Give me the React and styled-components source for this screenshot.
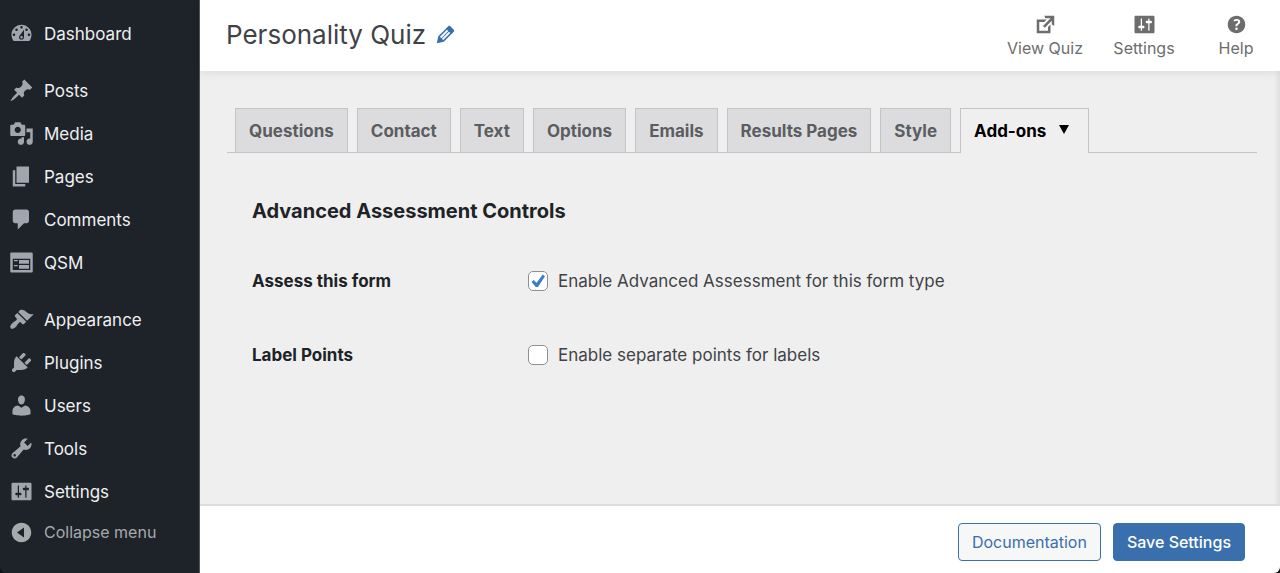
import styled, { createGlobalStyle } from 'styled-components';

const GlobalStyle = createGlobalStyle`
	* {
		box-sizing: border-box;
	}

	body {
		margin: 0;
		background-color: #111;
		font-family: Inter, 'Liberation Sans', sans-serif;
		color: #3f4347;
	}
`;

const ICONS = {
	dashboard:
		'M3.76 16h12.48c1.1-1.37 1.76-3.11 1.76-5 0-4.42-3.58-8-8-8s-8 3.58-8 8c0 1.89.66 3.63 1.76 5zM10 4c.55 0 1 .45 1 1s-.45 1-1 1-1-.45-1-1 .45-1 1-1zM6 6c.55 0 1 .45 1 1s-.45 1-1 1-1-.45-1-1 .45-1 1-1zm8 0c.55 0 1 .45 1 1s-.45 1-1 1-1-.45-1-1 .45-1 1-1zm-5.37 5.55L12 7v6c0 1.1-.9 2-2 2s-2-.9-2-2c0-.57.24-1.08.63-1.45zM4 10c.55 0 1 .45 1 1s-.45 1-1 1-1-.45-1-1 .45-1 1-1zm12 0c.55 0 1 .45 1 1s-.45 1-1 1-1-.45-1-1 .45-1 1-1zm-5 3c0-.55-.45-1-1-1s-1 .45-1 1 .45 1 1 1 1-.45 1-1z',
	posts:
		'M10.44 3.02l1.82-1.82 6.36 6.35-1.83 1.82c-1.05-.68-2.48-.57-3.41.36l-.75.75c-.92.93-1.04 2.35-.35 3.41l-1.83 1.82-2.41-2.41-2.8 2.79c-.42.42-3.38 2.71-3.8 2.29s1.86-3.39 2.28-3.81l2.79-2.79L4.1 9.36l1.83-1.82c1.05.69 2.48.57 3.4-.36l.75-.75c.93-.92 1.05-2.35.36-3.41z',
	media:
		'M13 11V4c0-.55-.45-1-1-1h-1.67L9 1H5L3.67 3H2c-.55 0-1 .45-1 1v7c0 .55.45 1 1 1h10c.55 0 1-.45 1-1zM7 4.5c1.38 0 2.5 1.12 2.5 2.5S8.38 9.5 7 9.5 4.5 8.38 4.5 7 5.62 4.5 7 4.5zM14 6h5v10.5c0 1.38-1.12 2.5-2.5 2.5S14 17.88 14 16.5s1.12-2.5 2.5-2.5c.17 0 .34.02.5.05V9h-3V6zm-4 8.05V13h2v3.5c0 1.38-1.12 2.5-2.5 2.5S7 17.88 7 16.5 8.12 14 9.5 14c.17 0 .34.02.5.05z',
	pages: 'M6 15V2h10v13H6zm-1 1h8v2H3V5h2v11z',
	comments:
		'M5 2h9c1.1 0 2 .9 2 2v7c0 1.1-.9 2-2 2h-2l-5 5v-5H5c-1.1 0-2-.9-2-2V4c0-1.1.9-2 2-2z',
	feedback:
		'M2 2h16c.55 0 1 .45 1 1v14c0 .55-.45 1-1 1H2c-.55 0-1-.45-1-1V3c0-.55.45-1 1-1zm15 14V7H3v9h14zM4 8v1h3V8H4zm4 0v3h8V8H8zm-4 4v1h3v-1H4zm4 0v3h8v-3H8z',
	appearance:
		'M14.48 11.06L7.41 3.99l1.5-1.5c.5-.56 2.3-.47 3.51.32 1.21.8 1.43 1.28 2.91 2.1 1.18.64 2.45 1.26 4.45.85zm-.71.71L6.7 4.7 4.93 6.47c-.39.39-.39 1.02 0 1.41l1.06 1.06c.39.39.39 1.03 0 1.42-.6.6-1.43 1.11-2.21 1.69-.35.26-.7.53-1.01.84C1.43 14.23.4 16.08 1.4 17.07c.99 1 2.84-.03 4.18-1.36.31-.31.58-.66.85-1.02.57-.78 1.08-1.61 1.69-2.21.39-.39 1.02-.39 1.41 0l1.06 1.06c.39.39 1.02.39 1.41 0z',
	plugins:
		'M13.11 4.36L9.87 7.6 8 5.73l3.24-3.24c.35-.34 1.05-.2 1.56.32.52.51.66 1.21.31 1.55zm-8 1.77l.91-1.12 9.01 9.01-1.19.84c-.71.71-2.63 1.16-3.82 1.16H6.14L4.9 17.26c-.59.59-1.54.59-2.12 0-.59-.58-.59-1.53 0-2.12l1.24-1.24v-3.88c0-1.13.4-3.19 1.09-3.89zm7.26 3.97l3.24-3.24c.34-.35 1.04-.21 1.55.31.52.51.66 1.21.31 1.55l-3.24 3.25z',
	users:
		'M10 9.25c-2.27 0-2.73-3.44-2.73-3.44C7 4.02 7.82 2 9.97 2c2.16 0 2.98 2.02 2.71 3.81 0 0-.41 3.44-2.68 3.44zm0 2.57L12.72 10c2.39 0 4.52 2.33 4.52 4.53v2.49s-3.65 1.13-7.24 1.13c-3.65 0-7.24-1.13-7.24-1.13v-2.49c0-2.25 1.94-4.48 4.47-4.48z',
	tools:
		'M16.68 9.77c-1.34 1.34-3.3 1.67-4.95.99l-5.41 6.52c-.99.99-2.59.99-3.58 0s-.99-2.59 0-3.57l6.52-5.42c-.68-1.65-.35-3.61.99-4.95 1.28-1.28 3.12-1.62 4.72-1.06l-2.89 2.89 2.82 2.82 2.86-2.87c.53 1.58.18 3.39-1.08 4.65zM3.81 16.21c.4.39 1.04.39 1.43 0 .4-.4.4-1.04 0-1.43-.39-.4-1.03-.4-1.43 0-.39.39-.39 1.03 0 1.43z',
	settings:
		'M18 16V4c0-.55-.45-1-1-1H3c-.55 0-1 .45-1 1v12c0 .55.45 1 1 1h14c.55 0 1-.45 1-1zM8 11h1c.55 0 1 .45 1 1s-.45 1-1 1H8v1.5c0 .28-.22.5-.5.5s-.5-.22-.5-.5V13H6c-.55 0-1-.45-1-1s.45-1 1-1h1V5.5c0-.28.22-.5.5-.5s.5.22.5.5V11zm5-2h-1c-.55 0-1-.45-1-1s.45-1 1-1h1V5.5c0-.28.22-.5.5-.5s.5.22.5.5V7h1c.55 0 1 .45 1 1s-.45 1-1 1h-1v5.5c0 .28-.22.5-.5.5s-.5-.22-.5-.5V9z',
	collapse:
		'M10 2.2c4.3 0 7.8 3.5 7.8 7.8s-3.5 7.8-7.8 7.8S2.2 14.3 2.2 10 5.7 2.2 10 2.2zM12 14V6l-5.6 4z',
	external:
		'M9 3h8v8l-2-1V6.92l-5.6 5.59-1.41-1.41L14.08 5H10zm3 12v-3l2-2v7H3V6h8L9 8H5v7h7z',
	help: 'M17 10c0-3.87-3.14-7-7-7-3.87 0-7 3.13-7 7s3.13 7 7 7c3.86 0 7-3.13 7-7zm-6.3 1.48H9.14v-.43c0-.38.08-.7.24-.98s.46-.57.88-.89c.41-.29.68-.53.81-.71.14-.18.2-.39.2-.62 0-.25-.09-.44-.28-.58-.19-.13-.45-.19-.79-.19-.58 0-1.25.19-2 .57l-.64-1.28c.87-.49 1.8-.74 2.77-.74.81 0 1.45.2 1.92.58.48.39.71.91.71 1.55 0 .43-.09.8-.29 1.11-.19.32-.57.67-1.11 1.06-.38.28-.61.49-.71.63-.1.15-.15.34-.15.57v.35zm-1.47 2.74c-.18-.17-.27-.42-.27-.73 0-.33.08-.58.26-.75s.43-.25.77-.25c.32 0 .57.09.75.26s.27.42.27.74c0 .3-.09.55-.27.72-.18.18-.43.27-.75.27-.33 0-.58-.09-.76-.26z',
	edit: 'M13.89 3.39l2.71 2.72c.46.46.42 1.24.03 1.64l-8.01 8.02-5.56 1.16 1.16-5.58s7.6-7.63 7.99-8.03c.39-.39 1.22-.39 1.68.07zm-2.73 2.79l-5.59 5.61 1.11 1.11 5.54-5.65zm-2.97 8.23l5.58-5.6-1.07-1.08-5.59 5.6z',
};

const MENU = [
	[{ label: 'Dashboard', icon: 'dashboard' }],
	[
		{ label: 'Posts', icon: 'posts' },
		{ label: 'Media', icon: 'media' },
		{ label: 'Pages', icon: 'pages' },
		{ label: 'Comments', icon: 'comments' },
		{ label: 'QSM', icon: 'feedback' },
	],
	[
		{ label: 'Appearance', icon: 'appearance' },
		{ label: 'Plugins', icon: 'plugins' },
		{ label: 'Users', icon: 'users' },
		{ label: 'Tools', icon: 'tools' },
		{ label: 'Settings', icon: 'settings' },
	],
];

const ACTIONS = [
	{ label: 'View Quiz', icon: 'external' },
	{ label: 'Settings', icon: 'settings' },
	{ label: 'Help', icon: 'help' },
];

const TABS = [
	'Questions',
	'Contact',
	'Text',
	'Options',
	'Emails',
	'Results Pages',
	'Style',
];

const FIELDS = [
	{
		id: 'assess-form',
		title: 'Assess this form',
		label: 'Enable Advanced Assessment for this form type',
		checked: true,
	},
	{
		id: 'label-points',
		title: 'Label Points',
		label: 'Enable separate points for labels',
		checked: false,
	},
];

const Layout = styled.div`
	display: flex;
	min-height: 100vh;
	border-radius: 0 0 6px 6px;
	overflow: hidden;
`;

const Sidebar = styled.nav`
	flex: none;
	width: 200px;
	padding-top: 12px;
	background-color: #1d2329;
	border-right: 1px solid #50555a;
`;

const MenuGroup = styled.ul`
	margin: 0 0 14px;
	padding: 0;
	list-style: none;

	&:last-of-type {
		margin-bottom: 0;
	}
`;

const MenuLink = styled.a`
	display: flex;
	align-items: center;
	gap: 10px;
	height: 43px;
	padding-left: 9px;
	font-size: 17px;
	color: #f0f0f1;
	text-decoration: none;
`;

const CollapseButton = styled.button`
	display: flex;
	align-items: center;
	gap: 10px;
	width: 100%;
	height: 38px;
	padding: 0 0 0 9px;
	border: none;
	background: none;
	font: inherit;
	font-size: 16px;
	color: #a7aaad;
	cursor: pointer;
`;

const Svg = styled.svg`
	flex: none;
	display: block;
	width: ${({ $size }) => $size}px;
	height: ${({ $size }) => $size}px;
	fill: ${({ $color }) => $color};
`;

const Main = styled.main`
	flex: 1;
	min-width: 0;
	display: flex;
	flex-direction: column;
`;

const Header = styled.header`
	position: relative;
	display: flex;
	align-items: center;
	justify-content: space-between;
	height: 71px;
	padding: 0 13px 2px 26px;
	background-color: #fff;
	box-shadow: 0 2px 8px rgba(0, 0, 0, 0.08);
`;

const TitleBox = styled.div`
	display: flex;
	align-items: center;
	gap: 7px;
`;

const Title = styled.h1`
	margin: 0;
	font-size: 26px;
	font-weight: 400;
`;

const IconButton = styled.button`
	padding: 0;
	border: none;
	background: none;
	cursor: pointer;
`;

const Actions = styled.div`
	display: flex;
	gap: 30px;
`;

const ActionLink = styled.a`
	display: flex;
	flex-direction: column;
	align-items: center;
	gap: 1px;
	min-width: 62px;
	font-size: 16px;
	line-height: 20px;
	color: #6d6d6d;
	text-decoration: none;
`;

const Content = styled.div`
	flex: 1;
	padding: 37px 23px 0 27px;
	background: linear-gradient(to left, #e0e0e0, #efefef 6px);
`;

const TabList = styled.div`
	display: flex;
	gap: 9px;
	padding-left: 8px;
	border-bottom: 1px solid #c3c4c7;
`;

const Tab = styled.button`
	height: 44px;
	padding: 0 13px;
	border: 1px solid #c3c4c7;
	border-bottom: none;
	background-color: #dcdcde;
	font: inherit;
	font-size: 17px;
	font-weight: 700;
	color: #5b5d60;
	cursor: pointer;

	&.active {
		height: 45px;
		margin-bottom: -1px;
		display: flex;
		align-items: center;
		gap: 12px;
		padding-right: 18px;
		background-color: #efefef;
		color: #000;
	}
`;

const Section = styled.section`
	padding: 45px 25px 0;
`;

const SectionTitle = styled.h2`
	margin: 0 0 44px;
	font-size: 20px;
	line-height: 26px;
	font-weight: 700;
	color: #1d2327;
`;

const Field = styled.div`
	display: flex;
	align-items: center;
	margin-bottom: 48px;
	font-size: 17px;
	line-height: 26px;
`;

const FieldTitle = styled.div`
	flex: none;
	width: 276px;
	font-weight: 700;
	color: #1d2327;
`;

const CheckLabel = styled.label`
	display: flex;
	align-items: center;
	gap: 10px;
`;

const Checkbox = styled.input`
	appearance: none;
	display: grid;
	place-items: center;
	width: 20px;
	height: 20px;
	margin: 0;
	border: 1px solid #8c8f94;
	border-radius: 5px;
	background-color: #fff;

	&:checked::before {
		content: '';
		width: 14px;
		height: 14px;
		background-color: #3a7fc0;
		clip-path: polygon(4% 58%, 18% 42%, 40% 62%, 84% 4%, 100% 16%, 50% 92%, 34% 92%);
	}
`;

const Footer = styled.footer`
	display: flex;
	justify-content: flex-end;
	gap: 12px;
	padding: 17px 35px 12px;
	border-top: 2px solid #dcdcde;
	background-color: #fff;
`;

const Button = styled.button`
	height: 38px;
	padding: 0 13px;
	border: 1px solid #3a6fae;
	border-radius: 4px;
	background-color: ${({ $primary }) => ($primary ? '#3a6fae' : '#f6f7f7')};
	font: inherit;
	font-size: 16px;
	font-weight: ${({ $primary }) => ($primary ? 500 : 400)};
	color: ${({ $primary }) => ($primary ? '#fff' : '#3a6fae')};
	cursor: pointer;
`;

function Icon({ name, size, color }) {
	return (
		<Svg viewBox="0 0 20 20" $size={size} $color={color} aria-hidden="true">
			<path fillRule="evenodd" d={ICONS[name]} />
		</Svg>
	);
}

export default function App() {
	return (
		<Layout>
			<GlobalStyle />
			<Sidebar>
				{MENU.map((group) => (
					<MenuGroup key={group[0].label}>
						{group.map(({ label, icon }) => (
							<li key={label}>
								<MenuLink href="#">
									<Icon name={icon} size={25} color="#a1a6ac" />
									{label}
								</MenuLink>
							</li>
						))}
					</MenuGroup>
				))}
				<CollapseButton type="button">
					<Icon name="collapse" size={25} color="#a7aaad" />
					Collapse menu
				</CollapseButton>
			</Sidebar>
			<Main>
				<Header>
					<TitleBox>
						<Title>Personality Quiz</Title>
						<IconButton type="button" aria-label="Edit name">
							<Icon name="edit" size={25} color="#3a6fae" />
						</IconButton>
					</TitleBox>
					<Actions>
						{ACTIONS.map(({ label, icon }) => (
							<ActionLink key={label} href="#">
								<Icon name={icon} size={25} color="#6d6d6d" />
								{label}
							</ActionLink>
						))}
					</Actions>
				</Header>
				<Content>
					<TabList role="tablist">
						{TABS.map((label) => (
							<Tab key={label} type="button" role="tab">
								{label}
							</Tab>
						))}
						<Tab type="button" role="tab" aria-selected="true" className="active">
							Add-ons
							<svg width="12" height="12" viewBox="0 0 12 12" aria-hidden="true">
								<path d="M1 0h10L6 9z" />
							</svg>
						</Tab>
					</TabList>
					<Section>
						<SectionTitle>Advanced Assessment Controls</SectionTitle>
						{FIELDS.map(({ id, title, label, checked }) => (
							<Field key={id}>
								<FieldTitle>{title}</FieldTitle>
								<CheckLabel htmlFor={id}>
									<Checkbox type="checkbox" id={id} defaultChecked={checked} />
									{label}
								</CheckLabel>
							</Field>
						))}
					</Section>
				</Content>
				<Footer>
					<Button type="button">Documentation</Button>
					<Button type="submit" $primary>
						Save Settings
					</Button>
				</Footer>
			</Main>
		</Layout>
	);
}
